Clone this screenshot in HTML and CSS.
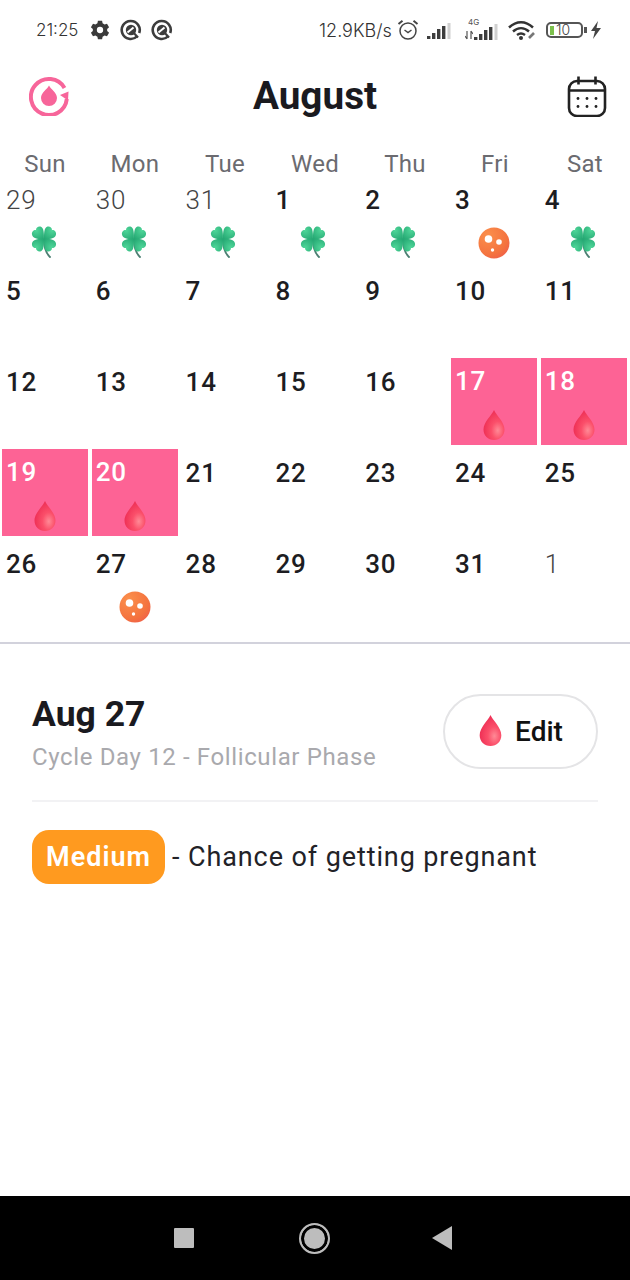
FILE: index.html
```html
<!DOCTYPE html>
<html lang="en">
<head>
<meta charset="utf-8">
<title>August</title>
<link rel="stylesheet" href="styles.css">
</head>
<body>
<svg class="defs" width="0" height="0" aria-hidden="true">
  <defs>
    <radialGradient id="gDrop" cx="0.68" cy="0.68" r="0.75">
      <stop offset="0" stop-color="#ff8a96"/>
      <stop offset="0.4" stop-color="#fb4f6a"/>
      <stop offset="1" stop-color="#ec2a52"/>
    </radialGradient>
    <radialGradient id="gBall" cx="0.3" cy="0.25" r="0.9">
      <stop offset="0" stop-color="#fb8f4c"/>
      <stop offset="0.7" stop-color="#f4733f"/>
      <stop offset="1" stop-color="#ef5c4a"/>
    </radialGradient>
    <radialGradient id="gLeaf" cx="0.35" cy="0.3" r="0.9">
      <stop offset="0" stop-color="#4fd699"/>
      <stop offset="1" stop-color="#25a873"/>
    </radialGradient>
    <path id="leaf" d="M14 13C10 13 3 13.500 2 8.500 1.500 5.500 4 3.500 6 4 6 1.500 8.500 0 11 .8 14 2 14 8 14 13z" fill="url(#gLeaf)"/>
    <symbol id="drop" viewBox="0 0 24 32">
      <path fill="url(#gDrop)" d="M12 1C10 6 1.500 13 1.500 20.500 1.500 26.500 6 31 12 31s10.500-4.500 10.500-10.500C22.500 13 14 6 12 1z"/>
    </symbol>
    <symbol id="clover" viewBox="0 0 28 32">
      <path fill="none" stroke="#4d7f73" stroke-width="1.800" stroke-linecap="round" d="M14 14c0 7 1 12 6 17"/>
      <use href="#leaf"/>
      <use href="#leaf" transform="matrix(-1 0 0 1 28 0)"/>
      <use href="#leaf" transform="matrix(1 0 0 -1 0 26)"/>
      <use href="#leaf" transform="matrix(-1 0 0 -1 28 26)"/>
    </symbol>
    <symbol id="ball" viewBox="0 0 32 32">
      <circle cx="16" cy="16" r="15.500" fill="url(#gBall)"/>
      <circle cx="10.500" cy="12" r="3.800" fill="#fff"/>
      <circle cx="21" cy="15" r="2.800" fill="#fff"/>
      <circle cx="14.500" cy="23" r="1.700" fill="#fff"/>
    </symbol>
    <symbol id="qring" viewBox="0 0 22 22">
      <path d="M17 17.400A9 9 0 1 1 19.200 14" fill="none" stroke="#3d3d3d" stroke-width="2.600"/>
      <circle cx="11" cy="11" r="5.200" fill="#3d3d3d"/>
      <path d="M7.500 13.500l6-5" stroke="#fff" stroke-width="2"/>
      <path d="M12 12l6 6.500" stroke="#3d3d3d" stroke-width="2.200"/>
    </symbol>
    <symbol id="bars" viewBox="0 0 24 16">
      <rect x="0" y="13" width="3.400" height="3" fill="#3d3d3d"/>
      <rect x="5" y="10" width="3.400" height="6" fill="#3d3d3d"/>
      <rect x="10" y="6" width="3.400" height="10" fill="#3d3d3d"/>
      <rect x="15" y="3" width="3.400" height="13" fill="#3d3d3d"/>
      <rect x="20.500" y="0" width="3" height="16" fill="#d0d0d0"/>
    </symbol>
  </defs>
</svg>
<main class="screen">
  <div class="status">
    <div class="status-left">
      <span class="time">21:25</span>
      <svg class="st-gear" viewBox="0 0 24 24"><path fill="#3a3a3a" fill-rule="evenodd" d="M9.500 1h5l.6 3 2.400 1.400 2.900-1 2.500 4.300-2.300 2 0 2.600 2.300 2-2.500 4.300-2.900-1-2.400 1.400-.6 3h-5l-.6-3-2.400-1.400-2.900 1-2.500-4.300 2.300-2 0-2.600-2.300-2L3.600 4.400l2.900 1L8.900 4zM12 8.200a3.800 3.800 0 1 0 0 7.600 3.800 3.800 0 0 0 0-7.600z"/></svg>
      <svg class="st-ring" viewBox="0 0 22 22"><use href="#qring"/></svg>
      <svg class="st-ring" viewBox="0 0 22 22"><use href="#qring"/></svg>
    </div>
    <div class="status-right">
      <span class="speed">12.9KB/s</span>
      <svg class="st-alarm" viewBox="0 0 22 22"><circle cx="11" cy="12" r="8" fill="none" stroke="#444" stroke-width="1.500"/><path d="M7.500 11l3.500 2.500 3.500-2.500" fill="none" stroke="#444" stroke-width="1.500"/><path d="M1.500 5L5.500 1.800M20.500 5L16.500 1.800" stroke="#444" stroke-width="2"/></svg>
      <svg class="st-bars" viewBox="0 0 24 16"><use href="#bars"/></svg>
      <span class="net">
        <span class="net-label">4G</span>
        <span class="net-row">
          <svg class="st-arrows" viewBox="0 0 8 10"><path d="M2 1v8M0 6l2 3M6 1v8M6 1l2 3" stroke="#555" stroke-width="1.200" fill="none"/></svg>
          <svg class="st-bars" viewBox="0 0 24 16"><use href="#bars"/></svg>
        </span>
      </span>
      <svg class="st-wifi" viewBox="0 0 30 20"><path d="M2 7.500C9.500 .5 18.500 .5 26 7.500M6 11.500c5-4.500 11-4.500 16 0M10 15c2.500-2 5.500-2 8 0" fill="none" stroke="#333" stroke-width="2.400"/><circle cx="14" cy="18" r="2" fill="#333"/><path d="M22 18l5-5" stroke="#777" stroke-width="2.600"/></svg>
      <span class="battery"><span class="bat-level"></span><span class="bat-num">10</span></span>
      <span class="bat-tip"></span>
      <svg class="st-bolt" viewBox="0 0 12 18"><path fill="#444" d="M8 0L1 10h4l-2 8 8-11H6.500z"/></svg>
    </div>
  </div>

  <header class="head">
    <svg class="logo" viewBox="0 0 40 40"><path d="M35.500 12A18 18 0 1 0 37.800 23" fill="none" stroke="#f7659a" stroke-width="4"/><path d="M31 19l8.500-3.500-.5 9z" fill="#f7659a"/><path d="M20 9.500c-1.500 3.500-8 7-8 12.500a8 8 0 0 0 16 0c0-5.500-6.500-9-8-12.500z" fill="#f7659a"/></svg>
    <h1 class="title">August</h1>
    <svg class="cal" viewBox="0 0 40 42"><rect x="2" y="6" width="36" height="35" rx="8" fill="none" stroke="#222" stroke-width="2.600"/><path d="M2 15.500h36M11.500 1.500v8M28.500 1.500v8" stroke="#222" stroke-width="2.600" fill="none"/><g fill="#222"><circle cx="11" cy="23.500" r="1.400"/><circle cx="20" cy="23.500" r="1.400"/><circle cx="29" cy="23.500" r="1.400"/><circle cx="11" cy="31.500" r="1.400"/><circle cx="20" cy="31.500" r="1.400"/><circle cx="29" cy="31.500" r="1.400"/></g></svg>
  </header>

  <div class="weekdays">
    <span>Sun</span><span>Mon</span><span>Tue</span><span>Wed</span><span>Thu</span><span>Fri</span><span>Sat</span>
  </div>

  <div class="month">
    <div class="day"><span class="num muted">29</span><svg class="ic-clover"><use href="#clover"/></svg></div>
    <div class="day"><span class="num muted">30</span><svg class="ic-clover"><use href="#clover"/></svg></div>
    <div class="day"><span class="num muted">31</span><svg class="ic-clover"><use href="#clover"/></svg></div>
    <div class="day"><span class="num">1</span><svg class="ic-clover"><use href="#clover"/></svg></div>
    <div class="day"><span class="num">2</span><svg class="ic-clover"><use href="#clover"/></svg></div>
    <div class="day"><span class="num">3</span><svg class="ic-ball"><use href="#ball"/></svg></div>
    <div class="day"><span class="num">4</span><svg class="ic-clover"><use href="#clover"/></svg></div>

    <div class="day"><span class="num">5</span></div>
    <div class="day"><span class="num">6</span></div>
    <div class="day"><span class="num">7</span></div>
    <div class="day"><span class="num">8</span></div>
    <div class="day"><span class="num">9</span></div>
    <div class="day"><span class="num">10</span></div>
    <div class="day"><span class="num">11</span></div>

    <div class="day"><span class="num">12</span></div>
    <div class="day"><span class="num">13</span></div>
    <div class="day"><span class="num">14</span></div>
    <div class="day"><span class="num">15</span></div>
    <div class="day"><span class="num">16</span></div>
    <div class="day period"><span class="num">17</span><svg class="ic-drop"><use href="#drop"/></svg></div>
    <div class="day period"><span class="num">18</span><svg class="ic-drop"><use href="#drop"/></svg></div>

    <div class="day period"><span class="num">19</span><svg class="ic-drop"><use href="#drop"/></svg></div>
    <div class="day period"><span class="num">20</span><svg class="ic-drop"><use href="#drop"/></svg></div>
    <div class="day"><span class="num">21</span></div>
    <div class="day"><span class="num">22</span></div>
    <div class="day"><span class="num">23</span></div>
    <div class="day"><span class="num">24</span></div>
    <div class="day"><span class="num">25</span></div>

    <div class="day"><span class="num">26</span></div>
    <div class="day"><span class="num">27</span><svg class="ic-ball"><use href="#ball"/></svg></div>
    <div class="day"><span class="num">28</span></div>
    <div class="day"><span class="num">29</span></div>
    <div class="day"><span class="num">30</span></div>
    <div class="day"><span class="num">31</span></div>
    <div class="day"><span class="num muted">1</span></div>
  </div>

  <section class="detail">
    <div class="detail-top">
      <div class="detail-text">
        <h2 class="date">Aug 27</h2>
        <p class="cycle">Cycle Day 12 - Follicular Phase</p>
      </div>
      <button class="edit"><svg class="edit-drop"><use href="#drop"/></svg><span>Edit</span></button>
    </div>
    <div class="chance">
      <span class="badge">Medium</span>
      <span class="chance-text">- Chance of getting pregnant</span>
    </div>
  </section>

  <nav class="navbar">
    <span class="nav-square"></span>
    <span class="nav-circle"></span>
    <svg class="nav-back" viewBox="0 0 20 24"><path d="M20 0v24L0 12z" fill="#bdbdbd"/></svg>
  </nav>
</main>
</body>
</html>
```

FILE: styles.css
```css
* { box-sizing: border-box; }
html, body { margin: 0; padding: 0; background: #fff; }
body { font-family: Roboto, "Liberation Sans", sans-serif; color: #1d1d22; }
.defs { position: absolute; }
svg { display: block; flex: none; }
.screen { width: 630px; height: 1280px; display: flex; flex-direction: column; overflow: hidden; background: #fff; }

.status { height: 60px; padding: 18px 28px 0 36px; display: flex; justify-content: space-between; align-items: flex-start; color: #444; }
.status-left, .status-right { display: flex; align-items: center; height: 24px; }
.time { font-family: Inter, sans-serif; font-size: 17px; font-weight: 300; width: 54px; color: #333; }
.st-gear { width: 20px; height: 20px; }
.st-ring { width: 22px; height: 22px; margin-left: 9px; }
.st-gear + .st-ring { margin-left: 10px; }
.speed { font-family: Inter, sans-serif; font-weight: 300; font-size: 18px; width: 78px; white-space: nowrap; color: #333; }
.st-alarm { width: 22px; height: 22px; }
.st-bars { width: 24px; height: 16px; margin-left: 8px; margin-top: 2px; }
.net { display: flex; flex-direction: column; align-items: flex-end; margin-left: 14px; width: 33px; height: 24px; position: relative; }
.net-label { font-family: Inter, sans-serif; font-size: 8px; line-height: 8px; color: #555; position: absolute; left: 3px; top: 0; }
.net-row { display: flex; align-items: flex-end; position: absolute; left: 0; bottom: 2px; }
.net-row .st-bars { margin: 0 0 0 1px; width: 24px; height: 16px; }
.st-arrows { width: 8px; height: 10px; }
.st-wifi { width: 30px; height: 20px; margin-left: 9px; }
.battery { width: 37px; height: 16px; margin-left: 9px; border: 2px solid #555; border-radius: 5px; display: flex; align-items: center; padding-left: 2px; }
.bat-level { width: 4px; height: 9px; background: #7cc04c; }
.bat-num { font-family: Inter, sans-serif; font-size: 14px; font-weight: 300; color: #444; margin-left: 2px; line-height: 12px; }
.bat-tip { width: 3px; height: 6px; background: #555; margin-left: 1px; }
.st-bolt { width: 12px; height: 18px; margin-left: 3px; }

.head { height: 72px; padding: 0 23px 0 29px; display: flex; align-items: center; justify-content: space-between; position: relative; }
.logo { width: 40px; height: 40px; }
.title { margin: 0; font-size: 38.7px; font-weight: 700; line-height: 44px; position: absolute; left: 0; right: 0; text-align: center; color: #1a1a1f; }
.cal { width: 40px; height: 42px; position: relative; }

.weekdays { height: 43px; display: grid; grid-template-columns: repeat(7, 90px); padding-top: 18px; align-items: center; }
.weekdays span { text-align: center; font-size: 24px; line-height: 28px; letter-spacing: 0.3px; color: #6b6b70; }

.month { display: grid; grid-template-columns: repeat(7, 89.8px); grid-auto-rows: 91px; }
.day { display: flex; flex-direction: column; align-items: center; padding: 2px; }
.num { align-self: flex-start; padding-left: 4px; font-size: 26px; font-weight: 500; line-height: 46px; height: 46px; letter-spacing: 0.8px; color: #1d1d22; }
.num.muted { font-weight: 300; color: #444; }
.period { background: #fd6395; background-clip: content-box; padding: 1px 1.4px 3px 2px; }
.period .num { color: #fff; height: 47px; }
.ic-clover { width: 28px; height: 32px; margin: 3px 2px 0 0; }
.ic-ball { width: 32px; height: 32px; margin-top: 4px; }
.ic-drop { width: 24px; height: 32px; margin-top: 4px; }

.detail { margin-top: 12px; border-top: 2px solid #d2d2dc; padding: 0 32px; display: flex; flex-direction: column; }
.detail-top { height: 158px; border-bottom: 2px solid #f2f2f4; display: flex; justify-content: space-between; padding-top: 49px; }
.date { margin: 0; font-size: 35.5px; line-height: 42px; font-weight: 700; color: #1a1a1f; }
.cycle { margin: 8px 0 0; font-size: 24px; line-height: 28px; color: #a9a9ad; letter-spacing: 0.63px; }
.edit { width: 155px; height: 75px; margin-top: 1px; border: 2px solid #e4e4e6; border-radius: 38px; background: #fff; display: flex; align-items: center; justify-content: center; gap: 12px; font-family: Roboto, sans-serif; font-size: 28px; font-weight: 500; color: #111; padding: 0; }
.edit-drop { width: 25px; height: 33px; margin-top: -2px; }

.chance { display: flex; align-items: center; margin-top: 28px; gap: 7px; }
.badge { width: 133px; height: 54px; background: #ff9a1f; border-radius: 17px; color: #fff; font-size: 27px; font-weight: 600; display: flex; align-items: center; justify-content: center; letter-spacing: 1px; }
.chance-text { font-size: 27px; letter-spacing: 0.9px; color: #222227; }

.navbar { margin-top: auto; height: 84px; background: #000; display: flex; align-items: center; padding: 0 0 0 174px; }
.nav-square { width: 20px; height: 20px; background: #bdbdbd; border-radius: 1px; }
.nav-circle { width: 31px; height: 31px; margin-left: 105px; border-radius: 50%; background: #bdbdbd; box-shadow: inset 0 0 0 3px #000; border: 2px solid #bdbdbd; }
.nav-back { width: 20px; height: 24px; margin-left: 102px; }
```
